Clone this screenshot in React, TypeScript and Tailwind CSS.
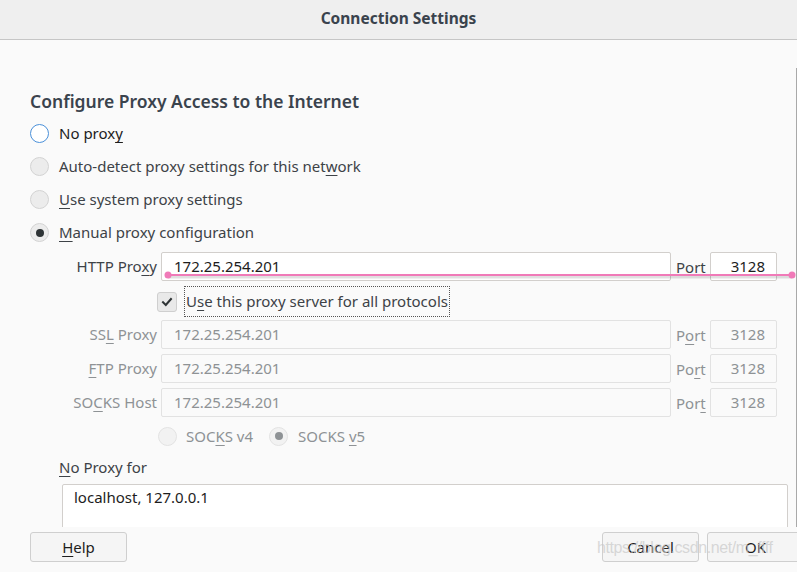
import React from "react";

type RadioState = "focus" | "off" | "on" | "disabledOff" | "disabledOn";

function Radio({ state }: { state: RadioState }) {
  const ring =
    state === "focus"
      ? "border-[#4a90d9] bg-white"
      : state === "disabledOff" || state === "disabledOn"
        ? "border-[#e3e3e3] bg-[#f2f2f2]"
        : "border-[#d3d3d3] bg-[#ececec]";
  return (
    <span className={`flex h-[19px] w-[19px] shrink-0 items-center justify-center rounded-full border ${ring}`}>
      {state === "on" && <span className="h-[8px] w-[8px] rounded-full bg-[#2e3436]" />}
      {state === "disabledOn" && <span className="h-[8px] w-[8px] rounded-full bg-[#8e9295]" />}
    </span>
  );
}

function U({ children }: { children: React.ReactNode }) {
  return <u className="underline decoration-1 underline-offset-[3px]">{children}</u>;
}

function ProxyRow({
  label,
  value,
  port,
  disabled,
  portLabel,
}: {
  label: React.ReactNode;
  value: string;
  port: string;
  disabled?: boolean;
  portLabel: React.ReactNode;
}) {
  const labelColor = disabled ? "text-[#8e9295]" : "text-[#3d4247]";
  const box = disabled
    ? "border-[#e2e2e2] bg-[#fafafa] text-[#8e9295]"
    : "border-[#d2cfcc] bg-white text-[#1d1d1d]";
  return (
    <div className="flex h-[29px] items-center">
      <span className={`w-[127px] text-right ${labelColor}`}>{label}</span>
      <div className={`ml-[4px] flex h-[29px] w-[510px] items-center rounded-[2px] border pl-[12px] ${box}`}>
        {value}
      </div>
      <span className={`w-[39px] pl-[5px] pt-[2px] ${labelColor}`}>{portLabel}</span>
      <div className={`flex h-[29px] w-[67px] items-center justify-end rounded-[2px] border pr-[11px] ${box}`}>
        {port}
      </div>
    </div>
  );
}

export default function App() {
  return (
    <div className="relative flex h-[572px] w-[797px] flex-col overflow-hidden bg-[#fafafa] font-['Noto_Sans',sans-serif] text-[15px] text-[#3d4247]">
      {/* Title bar */}
      <div className="flex h-[40px] shrink-0 items-center justify-center border-b border-[#c6c6c6] bg-[#efefef] pb-[2px] text-[15.5px] font-bold text-[#3a434d]">
        Connection Settings
      </div>

      {/* Scrolling body */}
      <div className="h-[487px] shrink-0 overflow-hidden">
        <div className="mt-[28px] h-[600px] border-r border-[#a9a9a9] pl-[30px] pt-[21px]">
          <div className="h-[24px] text-[17.5px] font-semibold leading-[24px] text-[#3a434d]">
            Configure Proxy Access to the Internet
          </div>

          <div className="mt-[4px] flex flex-col">
            <div className="flex h-[33px] items-center gap-[10px]">
              <Radio state="focus" />
              <span className="text-[#1d1d1d]">
                No prox<U>y</U>
              </span>
            </div>
            <div className="flex h-[33px] items-center gap-[10px]">
              <Radio state="off" />
              <span>
                Auto-detect proxy settings for this net<U>w</U>ork
              </span>
            </div>
            <div className="flex h-[33px] items-center gap-[10px]">
              <Radio state="off" />
              <span>
                <U>U</U>se system proxy settings
              </span>
            </div>
            <div className="flex h-[33px] items-center gap-[10px]">
              <Radio state="on" />
              <span>
                <U>M</U>anual proxy configuration
              </span>
            </div>
          </div>

          <div className="mt-[3px]">
            <ProxyRow
              label={
                <>
                  HTTP Pro<U>x</U>y
                </>
              }
              value="172.25.254.201"
              port="3128"
              portLabel="Port"
            />
          </div>

          <div className="mt-[5px] flex h-[31px] items-center pl-[127px]">
            <span className="flex h-[20px] w-[20px] items-center justify-center rounded-[3px] border border-[#cfcfcf] bg-[#e9e9e9]">
              <svg width="12" height="12" viewBox="0 0 12 12" fill="none">
                <path d="M2 6.2 L4.8 9 L10 3" stroke="#2e3436" strokeWidth="2" strokeLinecap="square" />
              </svg>
            </span>
            <span className="ml-[7px] flex h-[31px] items-center border border-dotted border-[#555] px-[1px]">
              U<U>s</U>e this proxy server for all protocols
            </span>
          </div>

          <div className="mt-[3px] flex flex-col gap-[5px]">
            <ProxyRow
              disabled
              label={
                <>
                  SS<U>L</U> Proxy
                </>
              }
              value="172.25.254.201"
              port="3128"
              portLabel={
                <>
                  P<U>o</U>rt
                </>
              }
            />
            <ProxyRow
              disabled
              label={
                <>
                  <U>F</U>TP Proxy
                </>
              }
              value="172.25.254.201"
              port="3128"
              portLabel={
                <>
                  Po<U>r</U>t
                </>
              }
            />
            <ProxyRow
              disabled
              label={
                <>
                  SO<U>C</U>KS Host
                </>
              }
              value="172.25.254.201"
              port="3128"
              portLabel={
                <>
                  Por<U>t</U>
                </>
              }
            />
          </div>

          <div className="mt-[5px] flex h-[28px] items-center pl-[128px] text-[#8e9295]">
            <Radio state="disabledOff" />
            <span className="ml-[9px]">
              SOC<U>K</U>S v4
            </span>
            <span className="ml-[16px]">
              <Radio state="disabledOn" />
            </span>
            <span className="ml-[10px]">
              SOCKS <U>v</U>5
            </span>
          </div>

          <div className="mt-[6px] flex h-[22px] items-center pl-[29px]">
            <span>
              <U>N</U>o Proxy for
            </span>
          </div>

          <div className="ml-[32px] mt-[6px] h-[80px] w-[726px] rounded-[2px] border border-[#d2cfcc] bg-white px-[11px] pt-[1px] text-[#1d1d1d]">
            localhost, 127.0.0.1
          </div>
        </div>
      </div>

      {/* Button bar */}
      <div className="flex flex-1 items-start pl-[30px] pt-[5px] text-[#1d1d1d]">
        <button className="flex h-[30px] w-[97px] shrink-0 items-center justify-center rounded-[3px] border border-[#cfcfcf] bg-[#f5f5f5]">
          <span>
            <U>H</U>elp
          </span>
        </button>
        <button className="ml-[475px] flex h-[30px] w-[97px] shrink-0 items-center justify-center rounded-[3px] border border-[#cfcfcf] bg-[#f5f5f5]">
          Cancel
        </button>
        <button className="ml-[8px] flex h-[30px] w-[97px] shrink-0 items-center justify-center rounded-[3px] border border-[#cfcfcf] bg-[#f5f5f5]">
          OK
        </button>
      </div>

      {/* Pink annotation stroke drawn over the dialog */}
      <svg className="pointer-events-none absolute left-[160px] top-[268px]" width="637" height="14" viewBox="0 0 637 14">
        <line x1="8" y1="9" x2="632" y2="9" stroke="#000" strokeOpacity="0.12" strokeWidth="3" />
        <line x1="8" y1="7" x2="632" y2="7" stroke="#f07ab8" strokeWidth="2" />
        <circle cx="8" cy="7" r="3.5" fill="#f07ab8" />
        <circle cx="632" cy="7" r="3.5" fill="#f07ab8" />
      </svg>

      {/* Watermark */}
      <span className="pointer-events-none absolute left-[597px] top-[536px] whitespace-nowrap font-['Liberation_Sans',sans-serif] text-[16px] tracking-[-0.4px] text-[#c8c8c8]/70">
        https://blog.csdn.net/m_ffff
      </span>
    </div>
  );
}
